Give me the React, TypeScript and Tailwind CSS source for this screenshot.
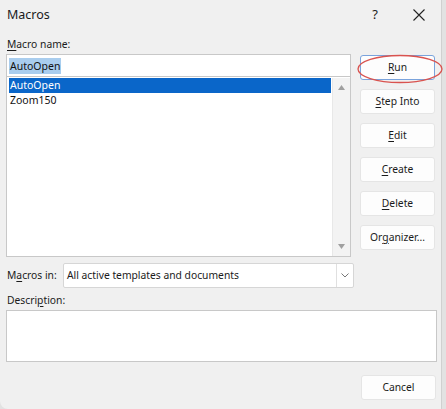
import React from 'react';

const font = { fontFamily: '"Noto Sans", "Open Sans", Arial, sans-serif' };

function Btn({ label, u, rest, className = '' }: { label?: string; u: string; rest: string; className?: string }) {
  return (
    <button
      className={`h-[25px] w-[75px] bg-[#fdfdfd] border border-[#e5e5e5] rounded-[3px] text-[10.3px] text-[#1b1b1b] flex items-center justify-center ${className}`}
    >
      {label}
      <span className="underline underline-offset-2">{u}</span>
      {rest}
    </button>
  );
}

export default function App() {
  return (
    <div className="w-[446px] h-[409px] bg-[#e2e2e2] flex" style={font}>
      <div className="relative w-[442px] h-[409px] bg-[#f0f0f0] rounded-bl-[8px] border-r border-[#d0d0d0] flex flex-col">
        {/* title bar */}
        <div className="h-[30px] flex items-center pl-[7px] pr-[14px]">
          <span className="text-[12.5px] text-[#1a1a1a] flex-1">Macros</span>
          <span className="text-[13px] text-[#1a1a1a] mr-[35px]">?</span>
          <svg width="12" height="12" viewBox="0 0 12 12" className="mr-[2px]">
            <path d="M0.5 0.5 L11.5 11.5 M11.5 0.5 L0.5 11.5" stroke="#222" strokeWidth="1.1" fill="none" />
          </svg>
        </div>

        <div className="flex px-[6px] pt-[7px]">
          <div className="w-[348px] flex flex-col">
            <div className="text-[10.3px] text-[#1b1b1b] h-[17px] pl-[1px]">
              <span className="underline underline-offset-2">M</span>acro name:
            </div>
            <div className="h-[23px] bg-white border border-[#c8c8c8] flex items-center pl-[2px]">
              <span className="bg-[#a9cdee] text-[10.5px] text-[#111] leading-[16px] px-[1px]">AutoOpen</span>
            </div>
            <div className="h-[180px] bg-white border border-t-0 border-[#c8c8c8] flex pt-[1px]">
              <div className="flex-1 flex flex-col pl-[2px] pr-[1px]">
                <div className="h-[15px] bg-[#0a66c9] text-white text-[10.5px] leading-[15px] pl-[1px]">AutoOpen</div>
                <div className="h-[15px] text-[#111] text-[10.5px] leading-[15px] pl-[1px]">Zoom150</div>
              </div>
              <div className="w-[18px] bg-[#f3f3f3] border-l border-[#e8e8e8] flex flex-col items-center justify-between py-[7px]">
                <svg width="7" height="5" viewBox="0 0 7 5"><path d="M0 5 L3.5 0 L7 5 Z" fill="#a0a0a0" /></svg>
                <svg width="7" height="5" viewBox="0 0 7 5"><path d="M0 0 L3.5 5 L7 0 Z" fill="#a0a0a0" /></svg>
              </div>
            </div>
          </div>

          <div className="flex flex-col gap-[9px] ml-[9px] mt-[18px]">
            <Btn u="R" rest="un" className="!border-[#7aa3dc]" />
            <Btn u="S" rest="tep Into" />
            <Btn u="E" rest="dit" />
            <Btn u="C" rest="reate" />
            <Btn u="D" rest="elete" />
            <Btn label="Or" u="g" rest="anizer..." />
          </div>
        </div>

        <div className="flex items-center px-[6px] mt-[6px]">
          <div className="w-[57px] text-[10.3px] text-[#1b1b1b] pl-[1px] whitespace-nowrap">
            M<span className="underline underline-offset-2">a</span>cros in:
          </div>
          <div className="w-[291px] h-[25px] bg-white border border-[#d6d6d6] rounded-[2px] flex items-center">
            <span className="flex-1 pl-[3px] text-[10.3px] text-[#1b1b1b]">All active templates and documents</span>
            <div className="w-[17px] h-full border-l border-[#e0e0e0] flex items-center justify-center">
              <svg width="8" height="5" viewBox="0 0 8 5"><path d="M0.5 0.5 L4 4 L7.5 0.5" stroke="#777" fill="none" /></svg>
            </div>
          </div>
        </div>

        <div className="px-[6px] mt-[3px]">
          <div className="text-[10.3px] text-[#1b1b1b] h-[19px] pl-[1px] flex items-center">
            <span>Descri<span className="underline underline-offset-2">p</span>tion:</span>
          </div>
          <div className="w-[431px] h-[52px] bg-white border border-[#c8c8c8]" />
        </div>

        <div className="flex justify-end pr-[5px] mt-[13px]">
          <Btn u="" rest="Cancel" />
        </div>

        {/* red annotation ellipse around Run */}
        <svg className="absolute left-[356px] top-[54px] pointer-events-none" width="88" height="32" viewBox="0 0 88 32">
          <ellipse cx="44" cy="15" rx="42" ry="13.5" stroke="#d9534f" strokeWidth="1.3" fill="none" />
        </svg>
      </div>
    </div>
  );
}
